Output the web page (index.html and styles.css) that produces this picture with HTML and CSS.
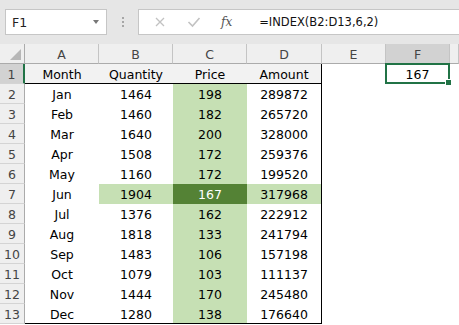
FILE: index.html
```html
<!DOCTYPE html>
<html lang="en">
<head>
    <meta charset="UTF-8">
    <title>INDEX example</title>
    <link rel="stylesheet" href="styles.css">
</head>
<body>
    <div class="toolbar">
        <div class="name-box">
            <span>F1</span>
            <span class="drop"></span>
        </div>
        <div class="grip"><i></i><i></i><i></i></div>
        <div class="formula-box">
            <svg class="fx-icon" width="12" height="12" viewBox="0 0 12 12">
                <path d="M2 2 L10 10 M10 2 L2 10" stroke="#c2c2c2" stroke-width="1.3" fill="none"/>
            </svg>
            <svg class="fx-icon" width="14" height="12" viewBox="0 0 14 12">
                <path d="M1.5 6 L5.5 10 L12.5 2" stroke="#c2c2c2" stroke-width="1.6" fill="none"/>
            </svg>
            <span class="fx">fx</span>
            <span class="formula">=INDEX(B2:D13,6,2)</span>
        </div>
    </div>

    <div class="sheet">
        <div class="hd corner"><span class="tri"></span></div>
        <div class="hd col">A</div>
        <div class="hd col">B</div>
        <div class="hd col">C</div>
        <div class="hd col">D</div>
        <div class="hd col">E</div>
        <div class="hd col active-col">F</div>
        <div class="hd col"></div>

        <div class="hd row active-row">1</div>
        <div class="c th">Month</div>
        <div class="c th">Quantity</div>
        <div class="c th">Price</div>
        <div class="c th last">Amount</div>
        <div class="c"></div>
        <div class="c selected">167<span class="handle"></span></div>
        <div class="c"></div>
    </div>

    <script>
        const data = [
            ['Jan', 1464, 198, 289872],
            ['Feb', 1460, 182, 265720],
            ['Mar', 1640, 200, 328000],
            ['Apr', 1508, 172, 259376],
            ['May', 1160, 172, 199520],
            ['Jun', 1904, 167, 317968],
            ['Jul', 1376, 162, 222912],
            ['Aug', 1818, 133, 241794],
            ['Sep', 1483, 106, 157198],
            ['Oct', 1079, 103, 111137],
            ['Nov', 1444, 170, 245480],
            ['Dec', 1280, 138, 176640]
        ];
        const sheet = document.querySelector('.sheet');

        function cell(text, cls) {
            const div = document.createElement('div');
            div.className = cls;
            div.textContent = text;
            sheet.appendChild(div);
        }

        data.forEach((r, i) => {
            const hit = r[0] === 'Jun';
            const bottom = i === data.length - 1 ? ' bottom' : '';
            cell(i + 2, 'hd row');
            cell(r[0], 'c' + bottom);
            cell(r[1], 'c' + bottom + (hit ? ' light' : ''));
            cell(r[2], 'c' + bottom + (hit ? ' dark' : ' light'));
            cell(r[3], 'c last' + bottom + (hit ? ' light' : ''));
            cell('', 'c');
            cell('', 'c');
            cell('', 'c');
        });
    </script>
</body>
</html>
```

FILE: styles.css
```css
body {
    margin: 0;
    padding: 0;
    width: 459px;
    height: 325px;
    overflow: hidden;
    background: #fff;
    font-family: "DejaVu Sans", sans-serif;
    color: #000;
}
.toolbar {
    height: 44px;
    background: #e6e6e6;
    display: flex;
    align-items: flex-start;
    padding: 9px 0 0 5px;
    box-sizing: border-box;
}
.name-box {
    width: 102px;
    height: 26px;
    box-sizing: border-box;
    border: 1px solid #c6c6c6;
    background: #fff;
    display: flex;
    align-items: center;
    justify-content: space-between;
    padding: 0 7px 0 6px;
    font-size: 12.5px;
    color: #222;
}
.drop {
    width: 0;
    height: 0;
    border-left: 3.5px solid transparent;
    border-right: 3.5px solid transparent;
    border-top: 4px solid #777;
}
.grip {
    width: 31px;
    height: 26px;
    display: flex;
    flex-direction: column;
    align-items: center;
    justify-content: center;
    gap: 2px;
}
.grip i {
    width: 2px;
    height: 2px;
    background: #a6a6a6;
}
.formula-box {
    flex: 1;
    height: 26px;
    box-sizing: border-box;
    border: 1px solid #c6c6c6;
    border-right: none;
    background: #fff;
    display: flex;
    align-items: center;
    padding-left: 15px;
    gap: 21px;
}
.fx {
    font-family: "DejaVu Serif", serif;
    font-style: italic;
    font-size: 12px;
    color: #555;
    margin-left: -1px;
}
.formula {
    font-size: 11.5px;
    margin-left: 6px;
    color: #111;
}

.sheet {
    display: grid;
    grid-template-columns: 25px 74px 74px 74px 75px 64px 64px 1fr;
    grid-auto-rows: 20px;
    font-size: 12.5px;
}
.hd {
    background: #efefef;
    color: #444;
    display: flex;
    align-items: center;
    justify-content: center;
    box-sizing: border-box;
}
.col {
    border-right: 1px solid #c4c4c4;
    border-bottom: 1px solid #ababab;
    padding-top: 1px;
}
.corner {
    border-right: 1px solid #ababab;
    border-bottom: 1px solid #ababab;
    justify-content: flex-end;
    align-items: flex-end;
    padding: 0 3px 3px 0;
}
.tri {
    width: 0;
    height: 0;
    border-left: 11px solid transparent;
    border-bottom: 11px solid #b7b7b7;
}
.row {
    border-right: 1px solid #ababab;
    border-bottom: 1px solid #d4d4d4;
    padding-top: 1px;
}
.active-row {
    background: #d2d2d2;
    border-right: 2px solid #217346;
}
.active-col {
    background: #d2d2d2;
}
.c {
    display: flex;
    align-items: center;
    justify-content: center;
    box-sizing: border-box;
    padding-top: 1px;
    white-space: nowrap;
}
.th {
    background: #f2f2f2;
    border-bottom: 1px solid #000;
}
.last {
    border-right: 1px solid #000;
}
.bottom {
    border-bottom: 1px solid #000;
}
.light {
    background: #c6e0b4;
}
.dark {
    background: #548235;
    color: #fff;
}
.selected {
    position: relative;
    border: 2px solid #217346;
    margin: -1px 0 0 -1px;
}
.handle {
    position: absolute;
    right: -4px;
    bottom: -4px;
    width: 5px;
    height: 5px;
    background: #217346;
    border: 1px solid #fff;
}
```
